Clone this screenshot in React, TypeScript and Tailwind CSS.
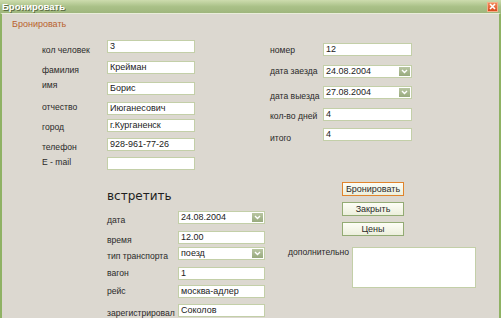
const inputCls =
  "h-[13px] border border-[#c3cfa8] bg-white pl-[2px] text-[9px] leading-[11px] text-[#222] whitespace-nowrap";

interface RowType {
  label: string;
  value: string;
  row: string;
  lbl: string;
  drop?: boolean;
}

const DropArrow = () => (
  <div className="ml-auto mr-[1px] mt-[1px] flex h-[9px] w-[11px] items-center justify-center bg-gradient-to-b from-[#b9c6a2] to-[#98aa7e]">
    <svg width="7" height="5" viewBox="0 0 7 5">
      <path d="M1 1 L3.5 3.5 L6 1" fill="none" stroke="#fff" strokeWidth="1.4" />
    </svg>
  </div>
);

const Row = ({ r, labelW, inputW }: { r: RowType; labelW: string; inputW: string }) => (
  <div className={`flex items-start ${r.row}`}>
    <div className={`${labelW} ${r.lbl} text-[8.6px] leading-[10px] text-[#2a2a2a] whitespace-nowrap`}>
      {r.label}
    </div>
    <div className={`${inputCls} ${inputW} flex items-start`}>
      <span>{r.value}</span>
      {r.drop && <DropArrow />}
    </div>
  </div>
);

const leftRows: RowType[] = [
  { label: "кол человек", value: "3", row: "h-[21px]", lbl: "mt-[5px]" },
  { label: "фамилия", value: "Крейман", row: "h-[21px]", lbl: "mt-[4px]" },
  { label: "имя", value: "Борис", row: "h-[20px]", lbl: "-mt-[2px]" },
  { label: "отчество", value: "Июганесович", row: "h-[17px]", lbl: "mt-0" },
  { label: "город", value: "г.Курганенск", row: "h-[19px]", lbl: "mt-[3px]" },
  { label: "телефон", value: "928-961-77-26", row: "h-[19px]", lbl: "mt-[4px]" },
  { label: "E - mail", value: "", row: "h-[13px]", lbl: "mt-0" },
];

const rightRows: RowType[] = [
  { label: "номер", value: "12", row: "h-[22px]", lbl: "mt-[2px]" },
  { label: "дата заезда", value: "24.08.2004", row: "h-[21px]", lbl: "mt-[1px]", drop: true },
  { label: "дата выезда", value: "27.08.2004", row: "h-[22px]", lbl: "mt-[5px]", drop: true },
  { label: "кол-во дней", value: "4", row: "h-[20px]", lbl: "mt-[3px]" },
  { label: "итого", value: "4", row: "h-[13px]", lbl: "mt-[5px]" },
];

const meetRows: RowType[] = [
  { label: "дата", value: "24.08.2004", row: "h-[20px]", lbl: "mt-[4px]", drop: true },
  { label: "время", value: "12.00", row: "h-[16px]", lbl: "mt-[4px]" },
  { label: "тип транспорта", value: "поезд", row: "h-[20px]", lbl: "mt-[4px]", drop: true },
  { label: "вагон", value: "1", row: "h-[18px]", lbl: "mt-[1px]" },
  { label: "рейс", value: "москва-адлер", row: "h-[19px]", lbl: "mt-[1px]" },
  { label: "зарегистрировал", value: "Соколов", row: "h-[13px]", lbl: "mt-[4px]" },
];

const Btn = ({ text, main }: { text: string; main?: boolean }) => (
  <div
    className={`flex h-[14px] w-[62px] items-center justify-center border bg-gradient-to-b from-[#fdfdf6] to-[#ecefdc] text-[9px] leading-[10px] text-[#2a2a2a] ${
      main ? "border-[#e0842c]" : "border-[#93ab74]"
    }`}
  >
    {text}
  </div>
);

export default function App() {
  return (
    <div className="flex h-[318px] w-[501px] flex-col overflow-hidden bg-[#dcd8d0] font-['Liberation_Sans',Arial,sans-serif]">
      {/* title bar */}
      <div className="flex h-[13px] shrink-0 items-center bg-gradient-to-b from-[#cddcae] via-[#aac188] to-[#9fb67d] pl-[2px]">
        <span className="text-[9.5px] font-bold leading-[11px] text-white [text-shadow:1px_1px_0_#5d6e44]">
          Бронировать
        </span>
        <div className="ml-auto mr-[3px] flex h-[10px] w-[11px] items-center justify-center border border-[#f3b08a] bg-gradient-to-b from-[#f08a5a] to-[#d9481c]">
          <svg width="7" height="7" viewBox="0 0 7 7">
            <path d="M1 1 L6 6 M6 1 L1 6" stroke="#fff" strokeWidth="1.6" />
          </svg>
        </div>
      </div>

      <div className="flex flex-1 flex-col border-l-2 border-r-2 border-t border-l-[#8fb264] border-r-[#8fb264] border-t-[#e9eddb]">
        <div className="ml-[10px] mt-[5px] h-[10px] text-[9px] leading-[10px] text-[#b9622e]">
          Бронировать
        </div>

        {/* top section */}
        <div className="mt-[11px] flex items-start">
          <div className="ml-[40px] flex flex-col">
            {leftRows.map((r) => (
              <Row key={r.label} r={r} labelW="w-[65px]" inputW="w-[88px]" />
            ))}
          </div>
          <div className="ml-[75px] mt-[3px] flex flex-col">
            {rightRows.map((r) => (
              <Row key={r.label} r={r} labelW="w-[53px]" inputW="w-[89px]" />
            ))}
          </div>
        </div>

        {/* bottom section */}
        <div className="mt-[12px] flex items-start">
          <div className="ml-[105px] flex flex-col">
            <div className="mt-[7px] h-[15px] font-['DejaVu_Sans',sans-serif] text-[12px] leading-[15px] text-[#1e1e1e]">
              встретить
            </div>
            <div className="mt-[7px] flex flex-col">
              {meetRows.map((r) => (
                <Row key={r.label} r={r} labelW="w-[71px]" inputW="w-[87px]" />
              ))}
            </div>
          </div>
          <div className="ml-[23px] flex flex-col">
            <div className="ml-[54px] flex flex-col gap-[6px]">
              <Btn text="Бронировать" main />
              <Btn text="Закрыть" />
              <Btn text="Цены" />
            </div>
            <div className="mt-[11px] flex items-start">
              <div className="w-[64px] text-[8.6px] leading-[10px] text-[#2a2a2a]">дополнительно</div>
              <div className="h-[41px] w-[124px] border border-[#c3cfa8] bg-white" />
            </div>
          </div>
        </div>
      </div>
    </div>
  );
}
